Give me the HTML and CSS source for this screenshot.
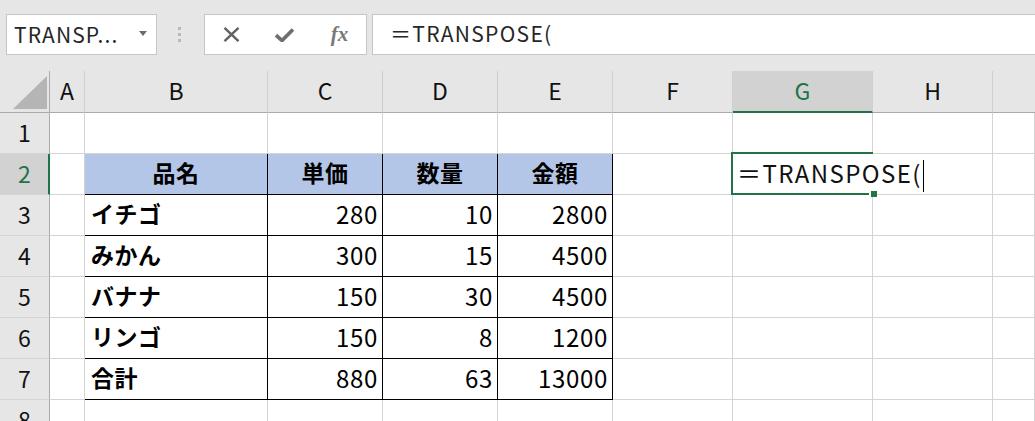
FILE: index.html
```html
<!DOCTYPE html>
<html lang="ja">
<head>
<meta charset="utf-8">
<title>TRANSPOSE</title>
<link rel="stylesheet" href="styles.css">
</head>
<body>
<div class="toolbar">
  <div class="namebox">
    <span class="name">TRANSP...</span>
    <svg class="drop" width="8" height="5" viewBox="0 0 8 5"><path d="M0 0H8L4 5Z" fill="#6b6b6b"/></svg>
  </div>
  <div class="grip"><i></i><i></i><i></i></div>
  <div class="fxbtns">
    <span class="btn"><svg width="17" height="15" viewBox="0 0 17 15"><path d="M1.5 0.8L15.5 14.2M15.5 0.8L1.5 14.2" stroke="#636363" stroke-width="2.4" fill="none"/></svg></span>
    <span class="btn"><svg width="19" height="14" viewBox="0 0 19 14"><path d="M1 7.2L7 12.6L18 1.4" stroke="#6e6e6e" stroke-width="3.6" fill="none" stroke-linejoin="miter"/></svg></span>
    <span class="btn fx">fx</span>
  </div>
  <div class="formula">＝TRANSPOSE(</div>
</div>

<div class="sheet">
  <div class="corner"><svg width="34" height="33" viewBox="0 0 34 33"><path d="M0 33L34 0V33Z" fill="#b5b5b5"/></svg></div>
  <div class="ch">A</div>
  <div class="ch">B</div>
  <div class="ch">C</div>
  <div class="ch">D</div>
  <div class="ch">E</div>
  <div class="ch">F</div>
  <div class="ch cur">G</div>
  <div class="ch">H</div>
  <div class="ch last"></div>

  <div class="tbl">
    <div class="t th">品名</div>
    <div class="t th">単価</div>
    <div class="t th">数量</div>
    <div class="t th">金額</div>

    <div class="t nm">イチゴ</div>
    <div class="t num">280</div>
    <div class="t num">10</div>
    <div class="t num">2800</div>

    <div class="t nm">みかん</div>
    <div class="t num">300</div>
    <div class="t num">15</div>
    <div class="t num">4500</div>

    <div class="t nm">バナナ</div>
    <div class="t num">150</div>
    <div class="t num">30</div>
    <div class="t num">4500</div>

    <div class="t nm">リンゴ</div>
    <div class="t num">150</div>
    <div class="t num">8</div>
    <div class="t num">1200</div>

    <div class="t nm">合計</div>
    <div class="t num">880</div>
    <div class="t num">63</div>
    <div class="t num">13000</div>
  </div>

  <!-- row 1 -->
  <div class="rh">1</div>
  <div class="c"></div><div class="c"></div><div class="c"></div><div class="c"></div><div class="c"></div>
  <div class="c"></div><div class="c"></div><div class="c"></div><div class="c"></div>

  <!-- row 2 -->
  <div class="rh cur">2</div>
  <div class="c"></div>
  <div class="c"></div>
  <div class="c active">
    <div class="editor">＝TRANSPOSE(<span class="caret"></span></div>
    <div class="sel"><span class="handle"></span></div>
  </div>
  <div class="c"></div>
  <div class="c"></div>

  <!-- row 3 -->
  <div class="rh">3</div>
  <div class="c"></div><div class="c"></div><div class="c"></div><div class="c"></div><div class="c"></div>

  <!-- row 4 -->
  <div class="rh">4</div>
  <div class="c"></div><div class="c"></div><div class="c"></div><div class="c"></div><div class="c"></div>

  <!-- row 5 -->
  <div class="rh">5</div>
  <div class="c"></div><div class="c"></div><div class="c"></div><div class="c"></div><div class="c"></div>

  <!-- row 6 -->
  <div class="rh">6</div>
  <div class="c"></div><div class="c"></div><div class="c"></div><div class="c"></div><div class="c"></div>

  <!-- row 7 -->
  <div class="rh">7</div>
  <div class="c"></div><div class="c"></div><div class="c"></div><div class="c"></div><div class="c"></div>

  <!-- row 8 -->
  <div class="rh">8</div>
  <div class="c"></div><div class="c"></div><div class="c"></div><div class="c"></div><div class="c"></div>
  <div class="c"></div><div class="c"></div><div class="c"></div><div class="c"></div>
</div>
</body>
</html>
```

FILE: styles.css
```css
* { box-sizing: border-box; }

html, body {
  margin: 0;
  padding: 0;
  overflow: hidden;
}

body {
  width: 1035px;
  height: 421px;
  background: #ffffff;
  font-family: "Noto Sans CJK JP", "Noto Sans", sans-serif;
  color: #000;
}

/* ---------- formula toolbar ---------- */
.toolbar {
  height: 71px;
  background: #e6e6e6;
  display: flex;
  align-items: flex-start;
  padding: 14px 0 0 6px;
}

.namebox {
  width: 151px;
  height: 41px;
  flex: none;
  background: #fff;
  border: 1px solid #c6c6c6;
  display: flex;
  align-items: center;
  justify-content: space-between;
  padding: 0 9px 0 7px;
}

.name {
  font-size: 21px;
  line-height: 1;
  color: #262626;
  letter-spacing: 1.1px;
  padding-bottom: 1px;
}

.drop { display: block; margin-top: -2px; }

.grip {
  flex: none;
  width: 3px;
  margin: 13px 23px 0 21px;
  display: flex;
  flex-direction: column;
  gap: 3px;
}

.grip i {
  display: block;
  width: 3px;
  height: 3px;
  background: #b9b9b9;
}

.fxbtns {
  flex: none;
  width: 163px;
  height: 41px;
  background: #fff;
  border: 1px solid #c6c6c6;
  display: flex;
  align-items: center;
}

.btn {
  flex: 1;
  display: flex;
  align-items: center;
  justify-content: center;
}

.btn svg { display: block; }

.fx {
  font-family: "Liberation Serif", serif;
  font-style: italic;
  font-weight: bold;
  font-size: 21px;
  line-height: 1;
  color: #787878;
  padding-left: 2px;
}

.formula {
  flex: 1;
  margin-left: 5px;
  margin-right: -20px;
  height: 41px;
  background: #fff;
  border: 1px solid #c6c6c6;
  display: flex;
  align-items: center;
  padding: 0 0 2px 17px;
  font-size: 21px;
  line-height: 1;
  letter-spacing: 1.3px;
  color: #262626;
}

/* ---------- sheet grid ---------- */
.sheet {
  display: grid;
  grid-template-columns: 50px 35px 183px 115px 115px 115px 120px 140px 120px 1fr;
  grid-template-rows: 42px repeat(8, 41px);
}

.corner {
  background: #e6e6e6;
  border-right: 1px solid #ababab;
  border-bottom: 1px solid #ababab;
  display: flex;
  align-items: flex-end;
  justify-content: flex-end;
  padding: 0 2px 3px 0;
}

.corner svg { display: block; }

.ch {
  background: #e6e6e6;
  border-right: 1px solid #cfcfcf;
  border-bottom: 1px solid #ababab;
  display: flex;
  align-items: center;
  justify-content: center;
  padding-bottom: 2px;
  font-size: 23px;
  line-height: 1;
  color: #111;
}

.ch.cur {
  background: #d2d2d2;
  border-bottom: 2px solid #217346;
  color: #217346;
  padding-bottom: 1px;
}

.ch.last { border-right: none; }

.rh {
  background: #e6e6e6;
  border-right: 1px solid #ababab;
  border-bottom: 1px solid #d4d4d4;
  display: flex;
  align-items: center;
  justify-content: center;
  padding-bottom: 2px;
  font-size: 23px;
  line-height: 1;
  color: #111;
}

.rh.cur {
  background: #d2d2d2;
  border-right: 2px solid #217346;
  color: #217346;
  padding-left: 1px;
}

.c {
  background: #fff;
  border-right: 1px solid #d4d4d4;
  border-bottom: 1px solid #d4d4d4;
}

/* ---------- data table (B2:E7) ---------- */
.tbl {
  grid-column: 3 / 7;
  grid-row: 3 / 9;
  margin: -1px 0 0 -1px;
  display: grid;
  grid-template-columns: 183px 115px 115px 115px;
  grid-template-rows: repeat(6, 41px);
  border-left: 1px solid #000;
  border-top: 1px solid #000;
  background: #fff;
}

.t {
  border-right: 1px solid #000;
  border-bottom: 1px solid #000;
  display: flex;
  align-items: center;
  padding-bottom: 3px;
  font-size: 23px;
  line-height: 1;
  color: #000;
}

.th {
  background: #b4c6e7;
  justify-content: center;
  font-weight: bold;
  letter-spacing: 0.5px;
}

.nm {
  font-weight: bold;
  padding-left: 6px;
  letter-spacing: 0.5px;
}

.num {
  justify-content: flex-end;
  padding-right: 4px;
  font-size: 24px;
  letter-spacing: 0.7px;
}

/* ---------- active cell G2 in edit mode ---------- */
.active {
  position: relative;
}

.editor {
  position: absolute;
  left: 0;
  top: 0;
  height: 39px;
  z-index: 2;
  background: #fff;
  display: flex;
  align-items: center;
  padding: 0 3px 2px 4px;
  font-size: 24px;
  line-height: 1;
  letter-spacing: 1.4px;
  color: #111;
  white-space: nowrap;
}

.caret {
  display: block;
  width: 1px;
  height: 32px;
  background: #000;
  margin: 7px 0 0 1px;
}

.sel {
  position: absolute;
  left: -2px;
  top: -2px;
  width: 142px;
  height: 43px;
  z-index: 3;
  border: 2px solid #217346;
  border-right: none;
  pointer-events: none;
}

.handle {
  position: absolute;
  right: -4px;
  bottom: -4px;
  width: 8px;
  height: 6px;
  background: #217346;
  border-left: 2px solid #fff;
}
```
